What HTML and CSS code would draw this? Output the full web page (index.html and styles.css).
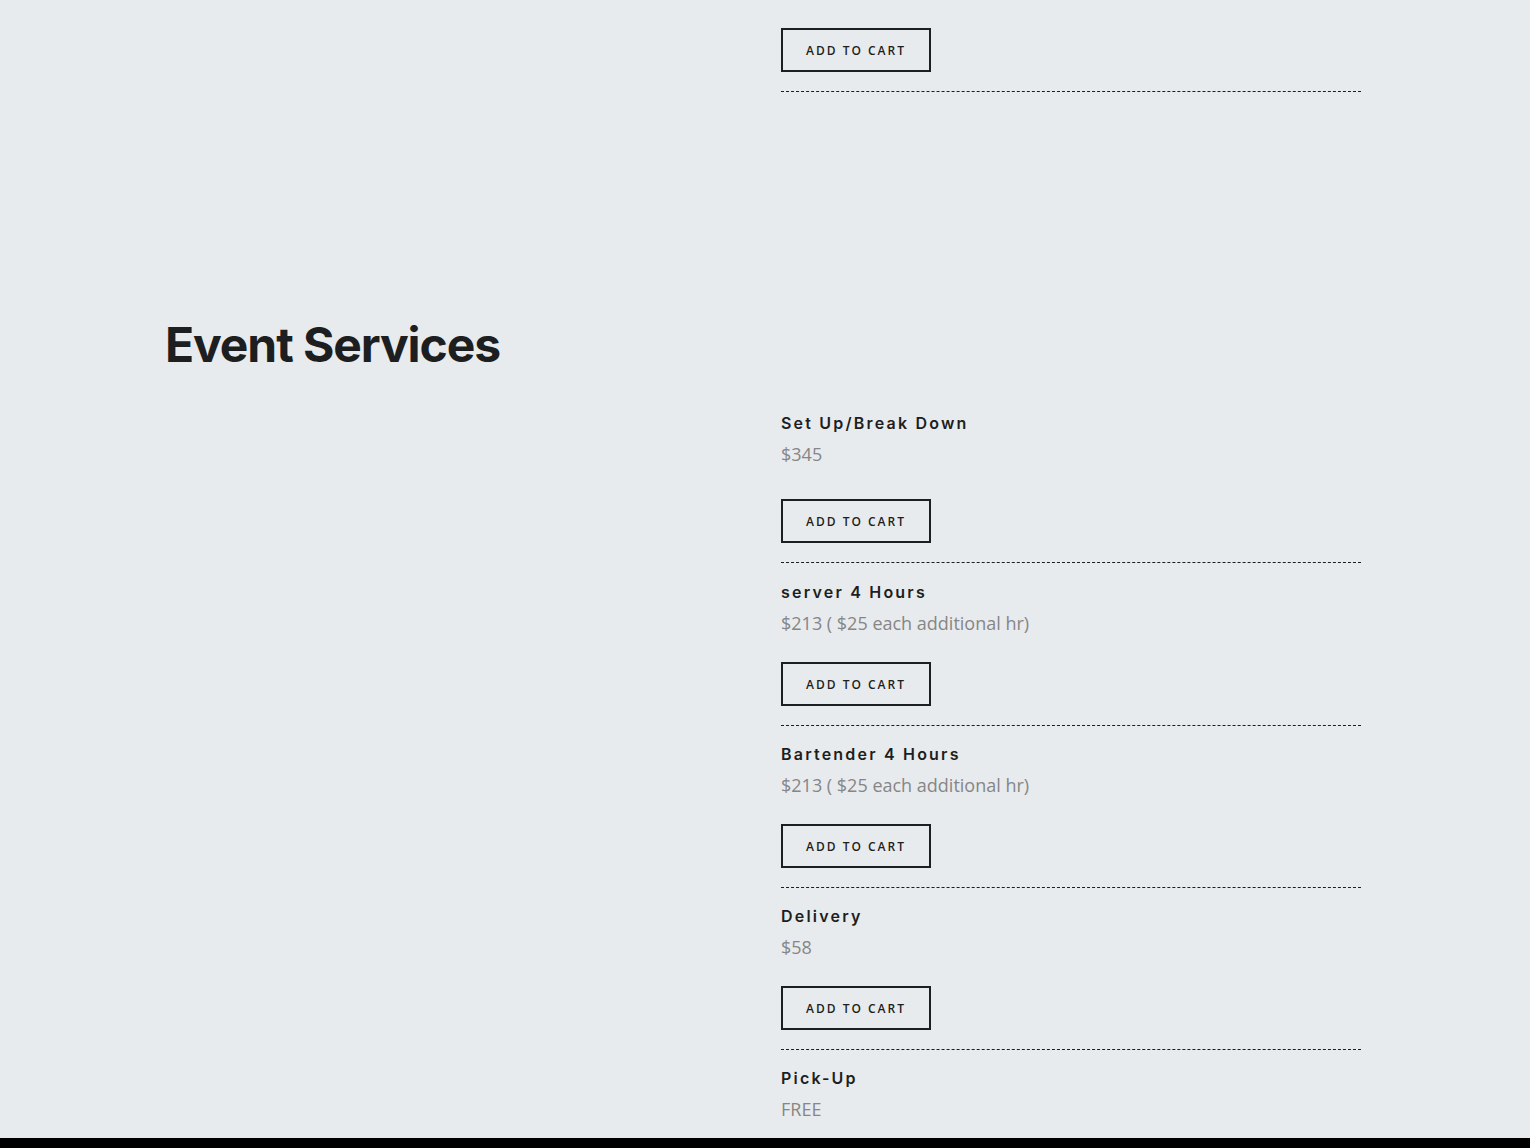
FILE: index.html
```html
<!DOCTYPE html>
<html lang="en">
<head>
    <meta charset="UTF-8" />
    <meta name="viewport" content="width=device-width, initial-scale=1.0" />
    <title>Event Services</title>
    <link rel="stylesheet" href="styles.css">
</head>
<body>

<div class="page">
    <div class="menu-list menu-list-top">
        <div class="item item-tail">
            <button class="btn">Add to Cart</button>
        </div>
    </div>

    <section class="menu-section">
        <h2 class="section-title">Event Services</h2>
        <div class="section-body">
            <div class="section-side"></div>
            <div class="menu-list">
                <div class="item item-first">
                    <div class="item-name">Set Up/Break Down</div>
                    <div class="item-price">$345</div>
                    <button class="btn">Add to Cart</button>
                </div>
                <div class="item item-tall">
                    <div class="item-name">server 4 Hours</div>
                    <div class="item-price">$213 ( $25 each additional hr)</div>
                    <button class="btn">Add to Cart</button>
                </div>
                <div class="item">
                    <div class="item-name">Bartender 4 Hours</div>
                    <div class="item-price">$213 ( $25 each additional hr)</div>
                    <button class="btn">Add to Cart</button>
                </div>
                <div class="item">
                    <div class="item-name">Delivery</div>
                    <div class="item-price">$58</div>
                    <button class="btn">Add to Cart</button>
                </div>
                <div class="item item-last">
                    <div class="item-name">Pick-Up</div>
                    <div class="item-price">FREE</div>
                </div>
            </div>
        </div>
    </section>
</div>

<div class="bottom-bar"></div>

</body>
</html>
```

FILE: styles.css
```css
body {
    margin: 0;
    padding: 0;
    background-color: #e8ebee;
    font-family: "Open Sans", Arial, sans-serif;
    color: #1d1e20;
    height: 1148px;
    overflow: hidden;
}

.page {
    width: 1196px;
    padding-left: 165px;
}

.menu-list-top {
    margin-left: 616px;
    width: 580px;
}

.menu-list {
    display: flex;
    flex-direction: column;
}

.item {
    padding: 16px 0 19px;
    border-bottom: 1px dashed #1d1e20;
}

.item-tail {
    padding-top: 28px;
}

.item-first {
    padding-top: 17px;
}

.item-first .btn {
    margin-top: 31px;
}

.item-tall {
    padding-top: 17px;
}

.item-last {
    border-bottom: none;
}

.item-name {
    font-family: Inter, "Noto Sans", sans-serif;
    font-weight: 600;
    font-size: 16px;
    line-height: 24px;
    letter-spacing: 2.2px;
    color: #1d1e20;
}

.item-price {
    margin-top: 5px;
    font-size: 18px;
    line-height: 28px;
    color: #868686;
}

.btn {
    display: block;
    margin-top: 25px;
    width: 150px;
    height: 44px;
    padding: 0;
    background: transparent;
    border: 2px solid #1d1e20;
    font-family: "Open Sans", Arial, sans-serif;
    font-size: 12px;
    font-weight: 600;
    letter-spacing: 2px;
    text-transform: uppercase;
    color: #1d1e20;
    cursor: pointer;
}

.item-tail .btn {
    margin-top: 0;
}

.menu-section {
    padding-top: 224px;
}

.section-title {
    margin: 0;
    font-family: Inter, "Noto Sans", sans-serif;
    font-weight: 700;
    font-size: 48px;
    line-height: 58px;
    letter-spacing: -1.1px;
    color: #1d1e20;
}

.section-body {
    display: grid;
    grid-template-columns: 616px 580px;
    margin-top: 20px;
}

.bottom-bar {
    position: fixed;
    left: 0;
    right: 0;
    bottom: 0;
    height: 10px;
    background-color: #000;
}
```
